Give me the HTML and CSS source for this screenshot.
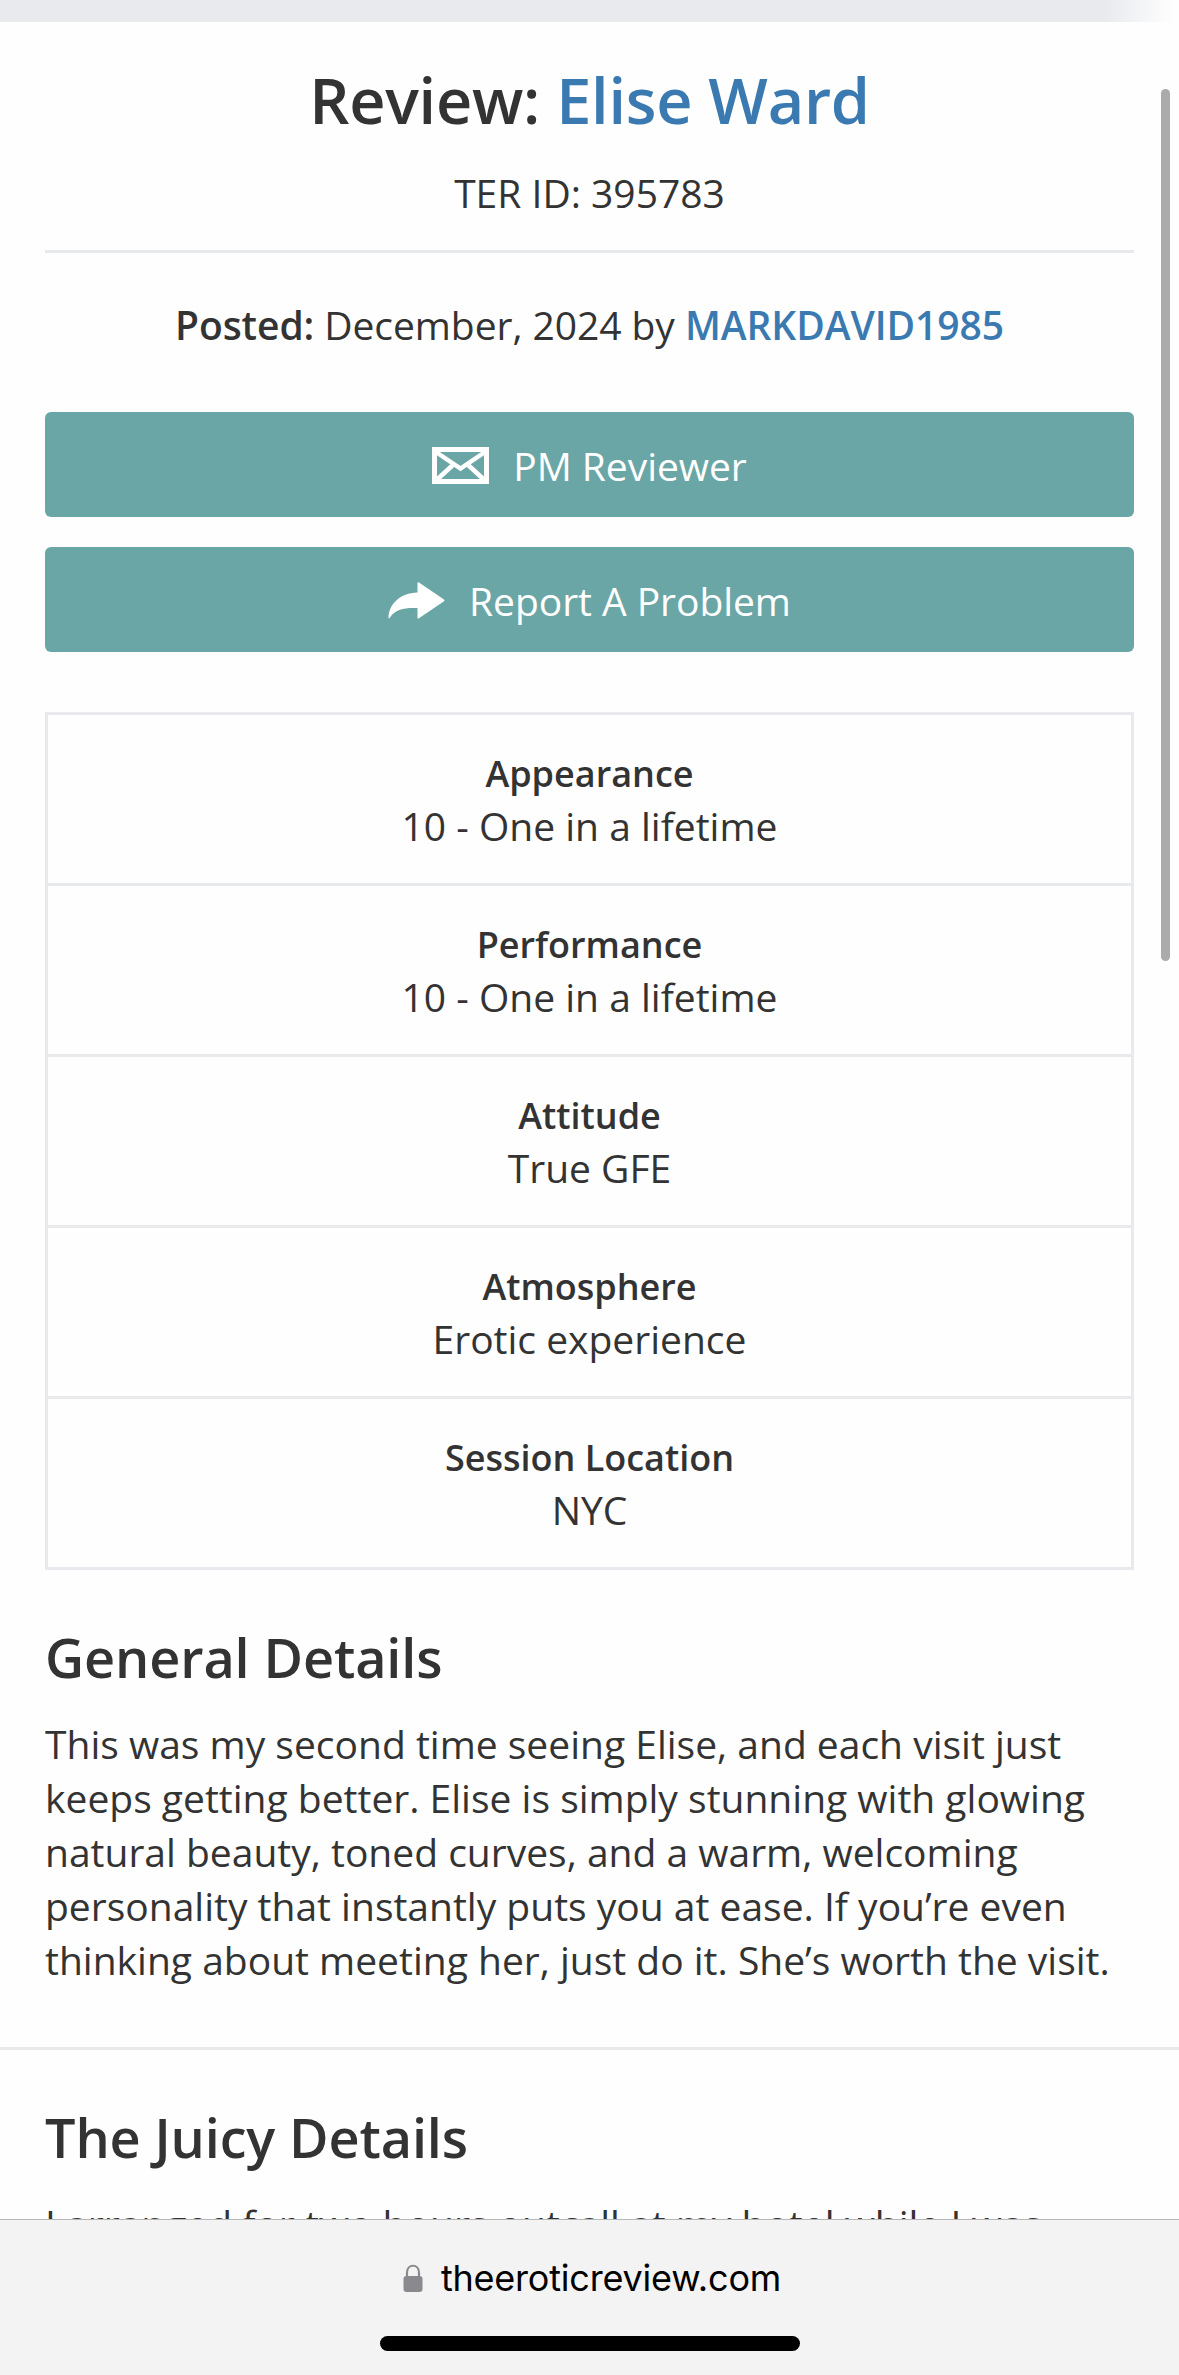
FILE: index.html
```html
<!DOCTYPE html>
<html lang="en">
    <head>
        <title>Review: Elise Ward</title>
        <meta charset="utf-8">
        <link rel="stylesheet" href="styles.css">
    </head>
    <body>

    <div id="page">
        <div class="topBand"></div>

        <div class="container">
            <h1>Review: <a href="#">Elise Ward</a></h1>
            <div class="terId">TER ID: 395783</div>
            <div class="posted"><b>Posted:</b> December, 2024 by <a href="#">MARKDAVID1985</a></div>

            <a class="button" href="#">
                <svg width="57" height="37" viewBox="0 0 57 37" fill="none" stroke="#fff">
                    <rect x="2.5" y="2.5" width="52" height="32" stroke-width="5"/>
                    <path d="M4 5L28.5 21.5L53 5M4 33.5L21.5 17.5M53 33.5L35.5 17.5" stroke-width="4.5"/>
                </svg>
                <span>PM Reviewer</span>
            </a>
            <a class="button" href="#">
                <svg width="57" height="37" viewBox="0 0 57 37">
                    <path d="M29.5 0.5Q30 0 31 0.6L56 17.4Q57 18.3 56 19.2L31 36.2Q29.5 37 29.5 36V26C17 25.5 7 27 2 35.5Q0.5 37.5 0.5 35.5C1 22 12 11 29.5 10.5Z" fill="#fff"/>
                </svg>
                <span>Report A Problem</span>
            </a>

            <div class="ratings">
                <div class="row">
                    <div class="label">Appearance</div>
                    <div>10 - One in a lifetime</div>
                </div>
                <div class="row">
                    <div class="label">Performance</div>
                    <div>10 - One in a lifetime</div>
                </div>
                <div class="row">
                    <div class="label">Attitude</div>
                    <div>True GFE</div>
                </div>
                <div class="row">
                    <div class="label">Atmosphere</div>
                    <div>Erotic experience</div>
                </div>
                <div class="row">
                    <div class="label">Session Location</div>
                    <div>NYC</div>
                </div>
            </div>
        </div>

        <div class="details">
            <h2>General Details</h2>
            <p>This was my second time seeing Elise, and each visit just<br>
            keeps getting better. Elise is simply stunning with glowing<br>
            natural beauty, toned curves, and a warm, welcoming<br>
            personality that instantly puts you at ease. If you’re even<br>
            thinking about meeting her, just do it. She’s worth the visit.</p>
        </div>

        <div class="details">
            <h2>The Juicy Details</h2>
            <p>I arranged for two hours outcall at my hotel while I was</p>
        </div>
    </div>

    <div id="scrollbar"></div>

    <!-- browser bar -->
    <div id="addressBar">
        <div class="address">
            <svg width="20" height="28" viewBox="0 0 20 28">
                <path d="M4 14V8.5C4 -0.5 16 -0.5 16 8.5V14" fill="none" stroke="#8a8a8e" stroke-width="2.2"/>
                <rect x="0.5" y="12" width="19" height="16" rx="3" fill="#8a8a8e"/>
            </svg>
            <span>theeroticreview.com</span>
        </div>
        <div class="homeIndicator"></div>
    </div>

    </body>
</html>
```
FILE: styles.css
```css
html, body {
    height: 100%;
}

body {
    display: flex;
    flex-direction: column;
    margin: 0;
    background-color: #fefefe;
    color: #333;
    font-family: "Open Sans", sans-serif;
    font-size: 39px;
    line-height: 54px;
    overflow: hidden;
}

a {
    color: #3a7ab1;
    text-decoration: none;
}

h1, h2, p {
    margin: 0;
}

h1, h2, b {
    font-weight: 600;
}

#page {
    flex: 1;
    min-height: 0;
    overflow: hidden;
}

.topBand {
    height: 22px;
    background: linear-gradient(to right, #e8eaee 1105px, #fefefe 1174px);
}

.container {
    padding: 43px 45px 0;
    text-align: center;
}

h1 {
    font-size: 63px;
    letter-spacing: -0.25px;
    line-height: 69px;
}

.terId {
    padding: 32px 0 30px;
    border-bottom: 3px solid #e8e9ed;
}

.posted {
    padding: 45px 0 60px;
    letter-spacing: -0.06px;
}

.posted a {
    font-weight: 600;
}

/**** BUTTONS ****/

.button {
    display: flex;
    align-items: center;
    justify-content: center;
    gap: 24px;
    height: 105px;
    margin-bottom: 30px;
    border-radius: 6px;
    background-color: #6aa6a5;
    color: #fff;
}

.button svg {
    margin-top: 2px;
}

.button span {
    padding-top: 2px;
    letter-spacing: -0.05px;
}

/**** RATINGS ****/

.ratings {
    margin-top: 60px;
    border: 3px solid #e9eaed;
}

.row {
    padding: 33px 0 30px;
    border-bottom: 3px solid #e9eaec;
}

.row:last-child {
    border-bottom: none;
}

.label {
    font-size: 36px;
    font-weight: 600;
    line-height: 51px;
}

/**** DETAILS ****/

.details {
    padding: 57px 0 60px 45px;
    border-bottom: 3px solid #e9e9e9;
    white-space: nowrap;
}

h2 {
    margin-bottom: 30px;
    font-size: 54px;
    letter-spacing: -0.12px;
    line-height: 60px;
}

/**** BROWSER ****/

#scrollbar {
    position: absolute;
    top: 89px;
    right: 9px;
    width: 9px;
    height: 872px;
    border-radius: 5px;
    background-color: #ababab;
}

#addressBar {
    display: flex;
    flex-direction: column;
    justify-content: space-between;
    align-items: center;
    box-sizing: border-box;
    height: 156px;
    padding: 31px 0 24px;
    border-top: 1px solid #b8b8b8;
    background-color: #f3f3f3;
}

.address {
    display: flex;
    align-items: center;
    gap: 18px;
    padding-left: 5px;
    color: #000;
    font-family: Inter, sans-serif;
    font-size: 36px;
    letter-spacing: -0.2px;
}

.homeIndicator {
    width: 420px;
    height: 15px;
    border-radius: 8px;
    background-color: #000;
}
```
